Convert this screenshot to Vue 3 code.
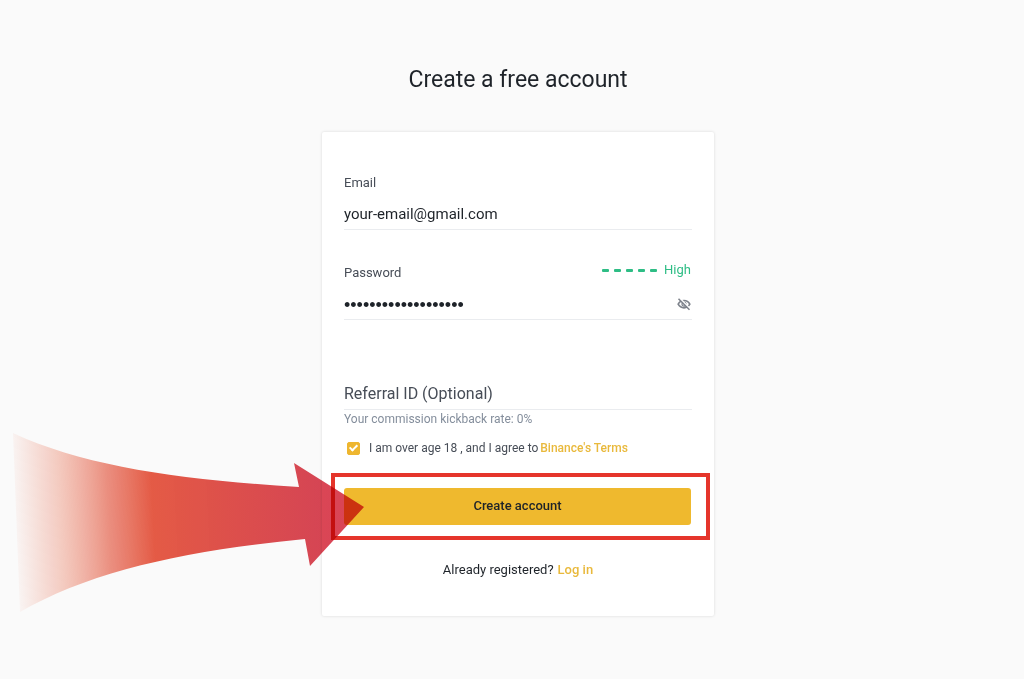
<script setup>
import { ref } from 'vue'

const email = ref('your-email@gmail.com')
const password = ref('correct-horse-stapl')
const referral = ref('')
const agreed = ref(true)
const visible = ref(false)
const strength = { bars: 5, label: 'High' }
</script>

<template>
  <main class="page">
    <h1 class="title">Create a free account</h1>

    <form class="card" @submit.prevent>
      <div class="field">
        <label class="label" for="email">Email</label>
        <input id="email" v-model="email" class="input email" type="email" />
      </div>

      <div class="field">
        <div class="label-row">
          <label class="label" for="password">Password</label>
          <div class="strength">
            <span v-for="n in strength.bars" :key="n" class="bar"></span>
            <span class="strength-text">{{ strength.label }}</span>
          </div>
        </div>
        <div class="input-row">
          <input
            id="password"
            v-model="password"
            class="input"
            :class="{ masked: !visible }"
            :type="visible ? 'text' : 'password'"
          />
          <button
            class="eye"
            type="button"
            aria-label="Toggle password visibility"
            @click="visible = !visible"
          >
            <svg viewBox="0 0 14 14" width="14" height="14" fill="none" stroke="#7d828b">
              <path d="M1.2 7.2C2.4 4.9 4.5 3.5 7 3.5s4.600 1.400 5.800 3.700C11.600 9.400 9.500 10.800 7 10.800S2.400 9.400 1.200 7.200Z" stroke-width="1.700" />
              <circle cx="7" cy="7.200" r="2" stroke-width="1.200" />
              <path d="M2.400.9 13.200 11.800" stroke="#fff" stroke-width="1.500" />
              <path d="M1.500 1.700 12.500 12.800" stroke-width="1.500" />
            </svg>
          </button>
        </div>
      </div>

      <div class="field referral">
        <input
          id="referral"
          v-model="referral"
          class="input"
          type="text"
          placeholder="Referral ID (Optional)"
          aria-label="Referral ID (Optional)"
        />
        <p class="hint">Your commission kickback rate: 0%</p>
      </div>

      <div class="terms">
        <input id="agree" v-model="agreed" class="check" type="checkbox" />
        <div class="terms-text">
          <label for="agree">I am over age 18 , and I agree to</label>
          <a class="link" href="#terms">Binance's Terms</a>
        </div>
      </div>

      <div class="action">
        <button class="submit" type="submit">Create account</button>
        <div class="frame"></div>
        <svg class="arrow" viewBox="12 432 354 182" width="354" height="182" aria-hidden="true">
          <defs>
            <linearGradient id="fade" gradientUnits="userSpaceOnUse" x1="14" y1="523" x2="330" y2="508">
              <stop offset="0" stop-color="#f08a70" stop-opacity="0.04" />
              <stop offset="0.15" stop-color="#f08a70" stop-opacity="0.42" />
              <stop offset="0.3" stop-color="#ea6b56" stop-opacity="0.74" />
              <stop offset="0.44" stop-color="#e8563f" stop-opacity="0.96" />
              <stop offset="0.7" stop-color="#e04a47" stop-opacity="0.97" />
              <stop offset="1" stop-color="#d83f50" stop-opacity="0.97" />
            </linearGradient>
          </defs>
          <path
            d="M13 433C86 467 183 480 299 487L294 463 364 507 310 566 305 539C190 550 92 570 20 612Z"
            fill="url(#fade)"
          />
        </svg>
      </div>

      <p class="login">
        <span>Already registered?</span>
        <a class="link" href="#login">Log in</a>
      </p>
    </form>
  </main>
</template>

<style>
body {
  margin: 0;
  background: #fafafa;
}
</style>

<style scoped>
.page {
  display: flex;
  flex-direction: column;
  align-items: center;
  box-sizing: border-box;
  min-height: 100vh;
  padding: 64px 0 48px 12px;
  background: #fafafa;
  color: #1e2329;
  font-family: Roboto, "Noto Sans", sans-serif;
}

.title {
  margin: 0 0 36px;
  font-size: 23px;
  font-weight: 400;
  line-height: 32px;
}

.card {
  box-sizing: border-box;
  width: 100%;
  max-width: 392px;
  padding: 41px 22px 36px;
  border-radius: 2px;
  background: #fff;
  box-shadow: 0 0 3px rgba(0, 0, 0, 0.14);
}

.field {
  display: flex;
  flex-direction: column;
  gap: 6px;
  margin-bottom: 33px;
}

.label {
  color: #474d57;
  font-size: 13px;
  line-height: 20px;
}

.label-row {
  display: flex;
  justify-content: space-between;
  height: 20px;
}

.strength {
  display: flex;
  align-items: center;
  gap: 5px;
  height: 14px;
  padding-right: 1px;
}

.bar {
  width: 7px;
  height: 3px;
  border-radius: 1px;
  background: #2ebd85;
}

.strength-text {
  margin-left: 2px;
  color: #2ebd85;
  font-size: 13px;
  line-height: 14px;
}

.input {
  box-sizing: border-box;
  width: 100%;
  height: 31px;
  padding: 0;
  border: 0;
  border-bottom: 1px solid #eaecef;
  outline: 0;
  background: transparent;
  color: #1e2329;
  font-family: inherit;
  font-size: 16px;
}

.input.email {
  font-size: 15px;
}

.input.masked {
  padding-top: 2px;
  font-family: "Liberation Sans", sans-serif;
  font-size: 18px;
}

.input::placeholder {
  color: #474d57;
  opacity: 1;
}

.input-row {
  display: flex;
  align-items: center;
  border-bottom: 1px solid #eaecef;
}

.input-row .input {
  height: 30px;
  border-bottom: 0;
}

.eye {
  display: flex;
  margin-right: 1px;
  padding: 0;
  border: 0;
  background: none;
}

.referral {
  gap: 1px;
  margin: 59px 0 11px;
}

.referral .input {
  padding-bottom: 2px;
}

.hint {
  margin: 0;
  color: #848e9c;
  font-size: 12px;
  line-height: 16px;
}

.terms {
  display: flex;
  align-items: center;
  gap: 9px;
  margin-bottom: 30px;
  padding-left: 3px;
  color: #474d57;
  font-size: 12px;
  line-height: 20px;
}

.terms-text {
  display: flex;
  gap: 2px;
}

.check {
  display: flex;
  align-items: center;
  justify-content: center;
  width: 13px;
  height: 13px;
  margin: 0;
  border: 1px solid #eeb62f;
  border-radius: 2px;
  box-sizing: border-box;
  background: #fff;
  appearance: none;
}

.check:checked {
  background: #eeb62f;
}

.check:checked::after {
  width: 3px;
  height: 6px;
  margin-bottom: 2px;
  border: solid #fff;
  border-width: 0 2px 2px 0;
  transform: rotate(45deg);
  content: "";
}

.link {
  color: #e9b93c;
  font-weight: 500;
  text-decoration: none;
}

.action {
  position: relative;
  padding-right: 1px;
}

.submit {
  display: block;
  width: 100%;
  height: 37px;
  padding: 0 0 2px;
  border: 0;
  border-radius: 3px;
  background: #efb92e;
  color: #1e2329;
  font-family: inherit;
  font-size: 13px;
  font-weight: 500;
}

.frame {
  position: absolute;
  inset: -15px -18px -15px -13px;
  border: 4px solid #e5352b;
  pointer-events: none;
}

.arrow {
  position: absolute;
  top: -56px;
  left: -332px;
  mix-blend-mode: multiply;
  pointer-events: none;
}

.login {
  display: flex;
  justify-content: center;
  gap: 4px;
  margin: 35px 0 0;
  font-size: 13px;
  line-height: 20px;
}
</style>
